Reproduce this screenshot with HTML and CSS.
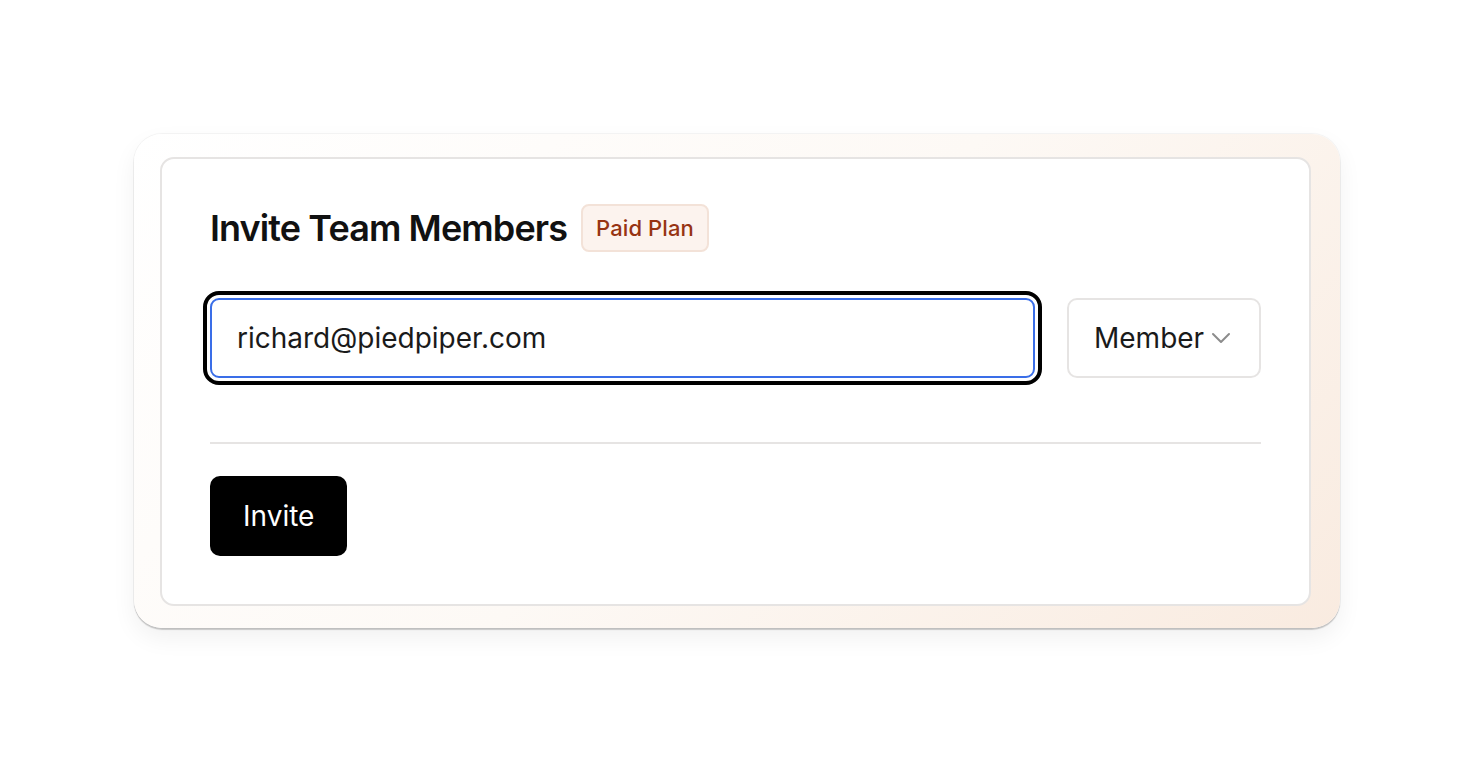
FILE: index.html
```html
<!DOCTYPE html>
<html>
<head>
<meta charset="utf-8">
<link rel="stylesheet" href="styles.css">
</head>
<body>
<div class="stage">
  <div class="frame">
    <div class="card">
      <div class="title-row">
        <h1 class="title">Invite Team Members</h1>
        <span class="badge">Paid Plan</span>
      </div>
      <div class="field-row">
        <div class="input">richard@piedpiper.com</div>
        <div class="select">
          <span>Member</span>
          <svg class="chev" width="20" height="20" viewBox="0 0 20 20" fill="none"><path d="M2 6 L10 14 L18 6" stroke="#8c8c8c" stroke-width="2" stroke-linecap="round" stroke-linejoin="round"/></svg>
        </div>
      </div>
      <div class="divider"></div>
      <div class="actions">
        <button class="btn">Invite</button>
      </div>
    </div>
  </div>
</div>
</body>
</html>
```
FILE: styles.css
```css
* { box-sizing: border-box; }
html, body { margin: 0; padding: 0; background: #fff; }
body { font-family: Inter, "Noto Sans", sans-serif; color: #111; }
.stage {
  width: 1474px;
  height: 762px;
  display: flex;
  align-items: center;
  justify-content: center;
}
.frame {
  width: 1206px;
  padding: 23px 29px 22px 26px;
  border-radius: 28px;
  background: linear-gradient(135deg, #ffffff 0%, #fdf9f5 50%, #f9ebe0 100%);
  box-shadow: 0 2px 1px rgba(0,0,0,0.18), 0 10px 24px rgba(0,0,0,0.06), 0 0 0 1px rgba(0,0,0,0.04);
}
.card {
  background: #fff;
  border: 2px solid #e6e4e3;
  border-radius: 14px;
  padding: 45px 48px 48px 48px;
}
.title-row {
  display: flex;
  align-items: center;
  gap: 14px;
}
.title {
  margin: 0;
  font-size: 36px;
  font-weight: 600;
  letter-spacing: -0.9px;
  line-height: 44px;
  color: #111;
}
.badge {
  height: 48px;
  display: inline-flex;
  align-items: center;
  padding: 0 13px;
  border-radius: 8px;
  background: #fcf3ee;
  border: 2px solid #f3e2d8;
  color: #973413;
  font-size: 22px;
  font-weight: 500;
  letter-spacing: 0.1px;
}
.field-row {
  display: flex;
  gap: 32px;
  margin-top: 46px;
}
.input {
  flex: 1;
  height: 80px;
  display: flex;
  align-items: center;
  padding: 0 25px;
  border: 2px solid #3a6ee8;
  border-radius: 9px;
  outline: 4px solid #000;
  outline-offset: 3px;
  font-size: 28px;
  color: #1a1a1a;
}
.select {
  width: 194px;
  height: 80px;
  display: flex;
  align-items: center;
  gap: 7px;
  padding: 0 25px;
  border: 2px solid #e6e4e3;
  border-radius: 10px;
  font-size: 28px;
  color: #1a1a1a;
}
.chev { flex: none; }
.divider {
  height: 2px;
  background: #e6e4e3;
  margin-top: 64px;
}
.actions { margin-top: 32px; }
.btn {
  height: 80px;
  padding: 0 33px;
  border: none;
  border-radius: 10px;
  background: #000;
  color: #fff;
  font-family: Inter, "Noto Sans", sans-serif;
  font-size: 28px;
  font-weight: 400;
}
```
